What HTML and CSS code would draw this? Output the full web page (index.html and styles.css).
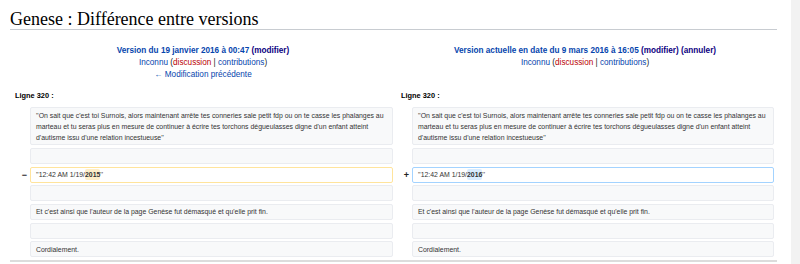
FILE: index.html
```html
<!DOCTYPE html>
<html lang="fr">
<head>
    <meta charset="UTF-8">
    <meta name="viewport" content="width=device-width, initial-scale=1.0">
    <title>Genese : Différence entre versions</title>
    <link rel="stylesheet" href="styles.css">
</head>
<body>
    <div class="page">
        <h1 class="first-heading">Genese : Différence entre versions</h1>

        <div class="diff">
            <!-- en-têtes des deux versions -->
            <div class="diff-title left">
                <div class="title-line"><a class="strong" href="#">Version du 19 janvier 2016 à 00:47</a> <a class="strong visited" href="#">(modifier)</a></div>
                <div class="title-line"><a href="#">Inconnu</a> (<a class="new" href="#">discussion</a> | <a href="#">contributions</a>)</div>
                <div class="title-line"><a href="#">← Modification précédente</a></div>
            </div>
            <div class="diff-title right">
                <div class="title-line"><a class="strong" href="#">Version actuelle en date du 9 mars 2016 à 16:05</a> <a class="strong visited" href="#">(modifier)</a> <a class="strong visited" href="#">(annuler)</a></div>
                <div class="title-line"><a href="#">Inconnu</a> (<a class="new" href="#">discussion</a> | <a href="#">contributions</a>)</div>
            </div>

            <div class="diff-lineno left">Ligne 320 :</div>
            <div class="diff-lineno right">Ligne 320 :</div>

            <div class="diff-marker"></div>
            <div class="diff-context">''On sait que c'est toi Surnois, alors maintenant arrête tes conneries sale petit fdp ou on te casse les phalanges au marteau et tu seras plus en mesure de continuer à écrire tes torchons dégueulasses digne d'un enfant atteint d'autisme issu d'une relation incestueuse''</div>
            <div class="diff-marker"></div>
            <div class="diff-context">''On sait que c'est toi Surnois, alors maintenant arrête tes conneries sale petit fdp ou on te casse les phalanges au marteau et tu seras plus en mesure de continuer à écrire tes torchons dégueulasses digne d'un enfant atteint d'autisme issu d'une relation incestueuse''</div>

            <div class="diff-marker"></div>
            <div class="diff-context empty"></div>
            <div class="diff-marker"></div>
            <div class="diff-context empty"></div>

            <div class="diff-marker">−</div>
            <div class="diff-deletedline">''12:42 AM 1/19/<span class="diffchange">2015</span>''</div>
            <div class="diff-marker">+</div>
            <div class="diff-addedline">''12:42 AM 1/19/<span class="diffchange">2016</span>''</div>

            <div class="diff-marker"></div>
            <div class="diff-context empty"></div>
            <div class="diff-marker"></div>
            <div class="diff-context empty"></div>

            <div class="diff-marker"></div>
            <div class="diff-context">Et c'est ainsi que l'auteur de la page Genèse fut démasqué et qu'elle prit fin.</div>
            <div class="diff-marker"></div>
            <div class="diff-context">Et c'est ainsi que l'auteur de la page Genèse fut démasqué et qu'elle prit fin.</div>

            <div class="diff-marker"></div>
            <div class="diff-context empty"></div>
            <div class="diff-marker"></div>
            <div class="diff-context empty"></div>

            <div class="diff-marker"></div>
            <div class="diff-context">Cordialement.</div>
            <div class="diff-marker"></div>
            <div class="diff-context">Cordialement.</div>
        </div>

        <div class="page-rule"></div>
    </div>

    <div class="side-track"></div>
</body>
</html>
```

FILE: styles.css
```css
* {
    margin: 0;
    padding: 0;
    box-sizing: border-box;
}

body {
    font-family: "Liberation Sans", Arial, sans-serif;
    background: white;
    color: #222;
    height: 100vh;
    overflow: hidden;
    display: flex;
}

a {
    color: #0645ad;
    text-decoration: none;
}

a.strong {
    font-weight: bold;
}

a.visited {
    color: #0b0080;
}

a.new {
    color: #ba0000;
}

.page {
    width: 777px;
    padding-left: 10px;
}

.first-heading {
    font-family: "Liberation Serif", "Times New Roman", serif;
    font-size: 18px;
    font-weight: normal;
    line-height: 20px;
    color: #000;
    margin-top: 9px;
    border-bottom: 1px solid #c8ccd1;
}

/* tableau de différences */
.diff {
    display: grid;
    grid-template-columns: 14px 363px 13px 362px;
    column-gap: 3px;
    row-gap: 2.67px;
    padding: 0 3px;
    font-size: 6.9px;
}

.diff-title {
    text-align: center;
    font-size: 8.2px;
    line-height: 12px;
    padding-top: 15px;
    color: #222;
}

.diff-title.left {
    grid-column: 1 / 3;
}

.diff-title.right {
    grid-column: 3 / 5;
}

.diff-lineno {
    font-size: 7.4px;
    font-weight: bold;
    color: #000;
    line-height: 12px;
    padding: 6px 0 3px 2px;
}

.diff-lineno.left {
    grid-column: 1 / 3;
}

.diff-lineno.right {
    grid-column: 3 / 5;
    padding-left: 5px;
}

.diff-marker {
    text-align: right;
    font-size: 9px;
    font-weight: bold;
    line-height: 16px;
    color: #222;
}

.diff-context,
.diff-deletedline,
.diff-addedline {
    line-height: 11px;
    min-height: 16px;
    padding: 1.5px 5px;
    border: 1px solid #eaecf0;
    border-radius: 2px;
    background: #f8f9fa;
    color: #333;
}

.diff-deletedline {
    background: white;
    border-color: #ffe49c;
}

.diff-addedline {
    background: white;
    border-color: #a3d3ff;
}

.diffchange {
    font-weight: bold;
    padding: 2px 0;
    border-radius: 2px;
}

.diff-deletedline .diffchange {
    background: #feeec8;
}

.diff-addedline .diffchange {
    background: #d8ecff;
}

.page-rule {
    margin-top: 3px;
    border-top: 2px solid #dcdcdc;
}

.side-track {
    margin-left: auto;
    width: 9px;
    background: #f2f2f2;
}
```
